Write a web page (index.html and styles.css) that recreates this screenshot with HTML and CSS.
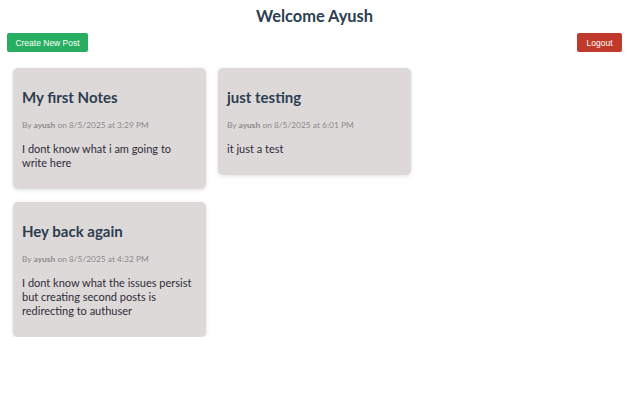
FILE: index.html
```html
<!DOCTYPE html>
<html>
<head>
<meta charset="utf-8">
<link rel="stylesheet" href="styles.css">
</head>
<body>
<div class="page">
  <h1 class="welcome">Welcome Ayush</h1>
  <div class="actions">
    <button class="btn btn-create">Create New Post</button>
    <button class="btn btn-logout">Logout</button>
  </div>
  <div class="posts">
    <div class="card">
      <h2 class="card-title">My first Notes</h2>
      <p class="meta">By <b>ayush</b> on 8/5/2025 at 3:29 PM</p>
      <p class="body">I dont know what i am going to write here</p>
    </div>
    <div class="card">
      <h2 class="card-title">just testing</h2>
      <p class="meta">By <b>ayush</b> on 8/5/2025 at 6:01 PM</p>
      <p class="body">it just a test</p>
    </div>
    <div class="card">
      <h2 class="card-title">Hey back again</h2>
      <p class="meta">By <b>ayush</b> on 8/5/2025 at 4:32 PM</p>
      <p class="body">I dont know what the issues persist but creating second posts is redirecting to authuser</p>
    </div>
  </div>
</div>
</body>
</html>
```
FILE: styles.css
```css
* { box-sizing: border-box; }
html, body { margin: 0; padding: 0; background: #fff; }
body { font-family: "Lato", "Open Sans", sans-serif; color: #2c3e50; }
.page { padding: 6px 6px 0 7px; }
.welcome {
  margin: 0;
  text-align: center;
  font-size: 16.4px;
  line-height: 20px;
  font-weight: 700;
  color: #2c3e50;
}
.actions {
  display: flex;
  justify-content: space-between;
  align-items: center;
  margin-top: 7px;
}
.btn {
  font-family: "Liberation Sans", Arial, sans-serif;
  font-size: 8.5px;
  font-weight: 400;
  color: #fff;
  border: none;
  border-radius: 2px;
  height: 19px;
  padding: 0 6px;
  cursor: pointer;
}
.btn-create { background: #27ae60; width: 81px; }
.btn-logout { background: #c0392b; width: 45px; }
.posts {
  display: grid;
  grid-template-columns: repeat(2, 193px);
  gap: 13px 12px;
  align-items: start;
  margin: 16px 0 0 6px;
}
.card {
  background: #ded9d9;
  border-radius: 5px;
  box-shadow: 0 1px 4px rgba(0,0,0,0.12);
  padding: 19px 9px 19px 9px;
}
.card-title {
  margin: 0;
  font-size: 15px;
  line-height: 20px;
  font-weight: 700;
  color: #2c3e50;
}
.meta {
  margin: 13px 0 0;
  font-size: 8.4px;
  line-height: 10px;
  color: #8a8a8a;
}
.meta b { font-weight: 700; }
.body {
  margin: 12px 0 0;
  font-size: 11px;
  line-height: 14px;
  color: #2c2c3a;
}
```
